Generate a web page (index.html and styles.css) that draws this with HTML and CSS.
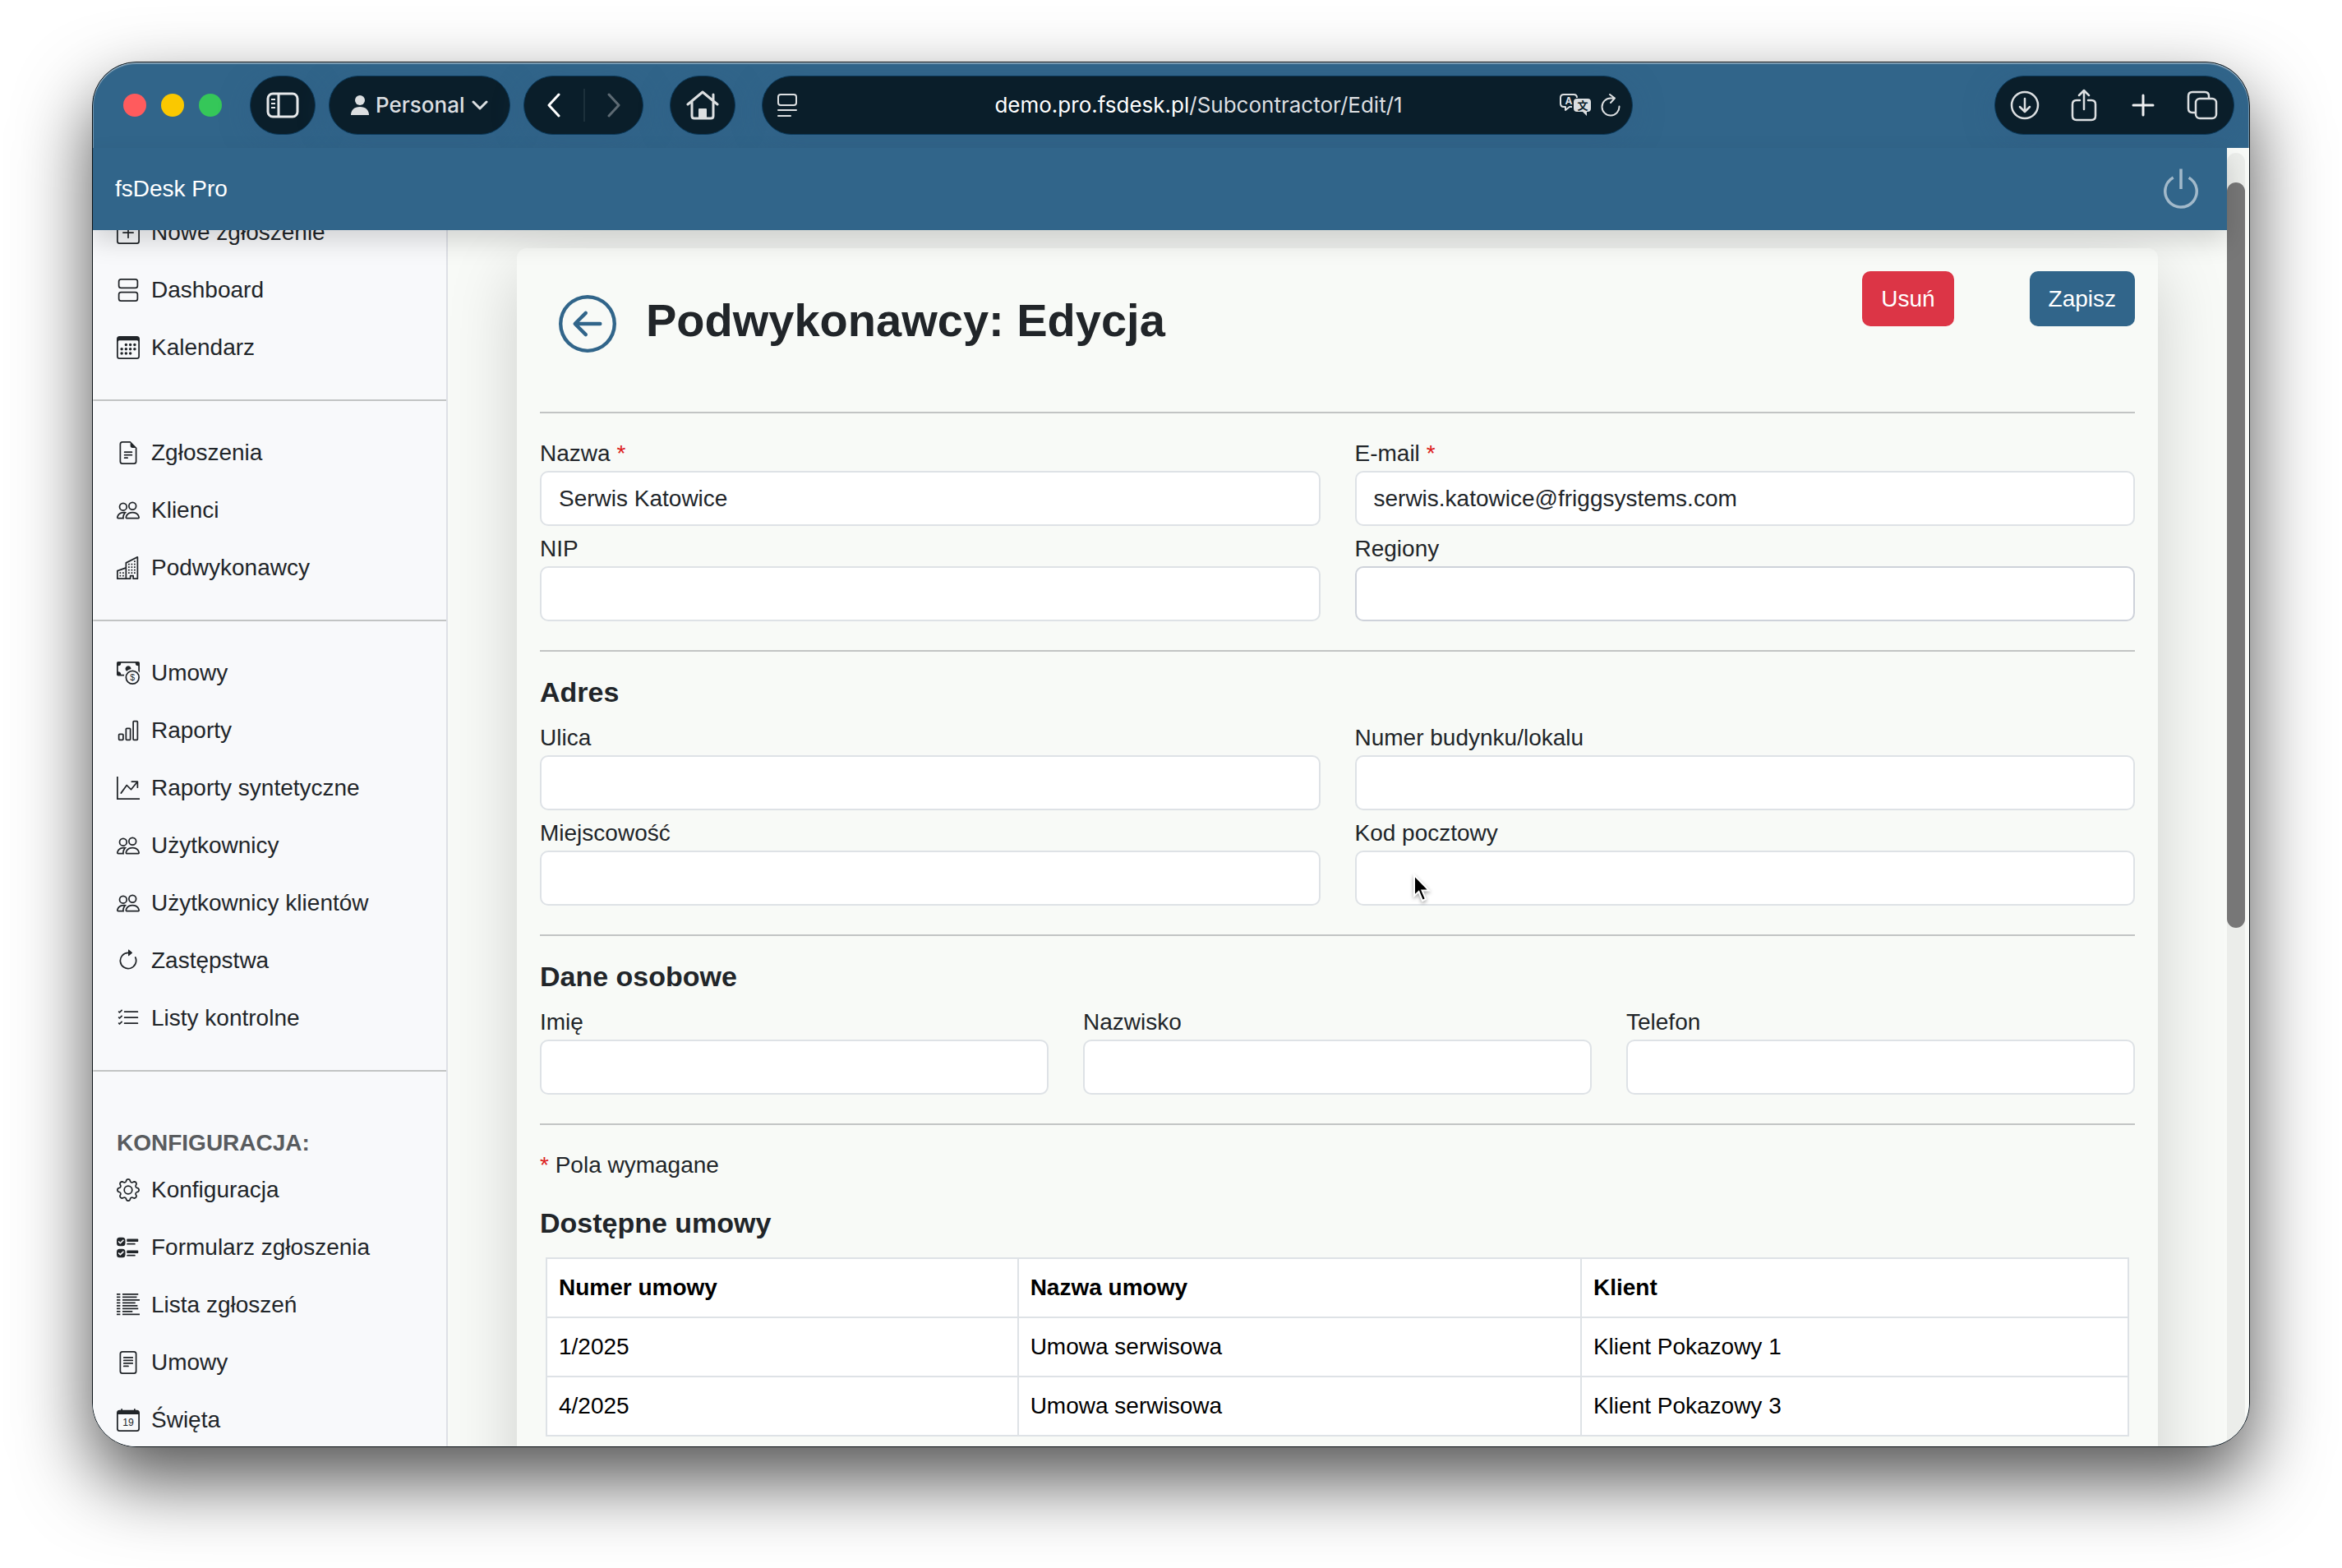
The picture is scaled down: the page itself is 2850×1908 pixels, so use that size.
FILE: index.html
```html
<!DOCTYPE html>
<html lang="pl">
<head>
  <meta charset="UTF-8">
  <title>fsDesk Pro</title>
  <link rel="stylesheet" href="styles.css">
</head>
<body>
  <!-- sidebar icons -->
  <svg class="sprite" aria-hidden="true">
    <symbol id="i-plus" viewBox="0 0 16 16"><path d="M14 1a1 1 0 0 1 1 1v12a1 1 0 0 1-1 1H2a1 1 0 0 1-1-1V2a1 1 0 0 1 1-1zM2 0a2 2 0 0 0-2 2v12a2 2 0 0 0 2 2h12a2 2 0 0 0 2-2V2a2 2 0 0 0-2-2z"/><path d="M8 4a.5.5 0 0 1 .5.5v3h3a.5.5 0 0 1 0 1h-3v3a.5.5 0 0 1-1 0v-3h-3a.5.5 0 0 1 0-1h3v-3A.5.5 0 0 1 8 4"/></symbol>
    <symbol id="i-stack" viewBox="0 0 16 16"><path d="M3 0h10a2 2 0 0 1 2 2v3a2 2 0 0 1-2 2H3a2 2 0 0 1-2-2V2a2 2 0 0 1 2-2m0 1a1 1 0 0 0-1 1v3a1 1 0 0 0 1 1h10a1 1 0 0 0 1-1V2a1 1 0 0 0-1-1zm0 8h10a2 2 0 0 1 2 2v3a2 2 0 0 1-2 2H3a2 2 0 0 1-2-2v-3a2 2 0 0 1 2-2m0 1a1 1 0 0 0-1 1v3a1 1 0 0 0 1 1h10a1 1 0 0 0 1-1v-3a1 1 0 0 0-1-1z"/></symbol>
    <symbol id="i-calendar" viewBox="0 0 16 16"><path d="M14 0H2a2 2 0 0 0-2 2v12a2 2 0 0 0 2 2h12a2 2 0 0 0 2-2V2a2 2 0 0 0-2-2M1 3.857C1 3.384 1.448 3 2 3h12c.552 0 1 .384 1 .857v10.286c0 .473-.448.857-1 .857H2c-.552 0-1-.384-1-.857z"/><path d="M6.500 7a1 1 0 1 0 0-2 1 1 0 0 0 0 2m3 0a1 1 0 1 0 0-2 1 1 0 0 0 0 2m3 0a1 1 0 1 0 0-2 1 1 0 0 0 0 2m-9 3a1 1 0 1 0 0-2 1 1 0 0 0 0 2m3 0a1 1 0 1 0 0-2 1 1 0 0 0 0 2m3 0a1 1 0 1 0 0-2 1 1 0 0 0 0 2m3 0a1 1 0 1 0 0-2 1 1 0 0 0 0 2m-9 3a1 1 0 1 0 0-2 1 1 0 0 0 0 2m3 0a1 1 0 1 0 0-2 1 1 0 0 0 0 2m3 0a1 1 0 1 0 0-2 1 1 0 0 0 0 2"/></symbol>
    <symbol id="i-doc" viewBox="0 0 16 16"><path d="M5.500 7a.5.5 0 0 0 0 1h5a.5.5 0 0 0 0-1zM5 9.500a.5.5 0 0 1 .5-.5h5a.5.5 0 0 1 0 1h-5a.5.5 0 0 1-.5-.5m0 2a.5.5 0 0 1 .5-.5h2a.5.5 0 0 1 0 1h-2a.5.5 0 0 1-.5-.5"/><path d="M9.500 0H4a2 2 0 0 0-2 2v12a2 2 0 0 0 2 2h8a2 2 0 0 0 2-2V4.500zm0 1v2A1.500 1.500 0 0 0 11 4.500h2V14a1 1 0 0 1-1 1H4a1 1 0 0 1-1-1V2a1 1 0 0 1 1-1z"/></symbol>
    <symbol id="i-people" viewBox="0 0 16 16"><path d="M15 14s1 0 1-1-1-4-5-4-5 3-5 4 1 1 1 1zm-7.978-1L7 12.996c.001-.264.167-1.030.76-1.720C8.312 10.629 9.282 10 11 10c1.717 0 2.687.63 3.240 1.276.593.69.758 1.457.76 1.720l-.008.002-.014.002zM11 7a2 2 0 1 0 0-4 2 2 0 0 0 0 4m3-2a3 3 0 1 1-6 0 3 3 0 0 1 6 0M6.936 9.280a6 6 0 0 0-1.230-.247A7 7 0 0 0 5 9c-4 0-5 3-5 4q0 1 1 1h4.216A2.240 2.240 0 0 1 5 13c0-1.010.377-2.042 1.090-2.904.243-.294.526-.569.846-.816M4.920 10A5.500 5.500 0 0 0 4 13H1c0-.26.164-1.030.76-1.724.545-.636 1.492-1.256 3.160-1.275ZM1.500 5.500a3 3 0 1 1 6 0 3 3 0 0 1-6 0m3-2a2 2 0 1 0 0 4 2 2 0 0 0 0-4"/></symbol>
    <symbol id="i-buildings" viewBox="0 0 16 16"><path d="M14.763.075A.5.5 0 0 1 15 .5v15a.5.5 0 0 1-.5.5h-3a.5.5 0 0 1-.5-.5V14h-1v1.500a.5.5 0 0 1-.5.5h-9a.5.5 0 0 1-.5-.5V10a.5.5 0 0 1 .342-.474L6 7.640V4.500a.5.5 0 0 1 .276-.447l8-4a.5.5 0 0 1 .487.022M6 8.694 1 10.360V15h5zM7 15h2v-1.500a.5.5 0 0 1 .5-.5h2a.5.5 0 0 1 .5.5V15h2V1.309l-7 3.500z"/><path d="M2 11h1v1H2zm2 0h1v1H4zm-2 2h1v1H2zm2 0h1v1H4zm4-4h1v1H8zm2 0h1v1h-1zm-2 2h1v1H8zm2 0h1v1h-1zm2-2h1v1h-1zm0 2h1v1h-1zM8 7h1v1H8zm2 0h1v1h-1zm2 0h1v1h-1zM8 5h1v1H8zm2 0h1v1h-1zm2 0h1v1h-1zm0-2h1v1h-1z"/></symbol>
    <symbol id="i-bars" viewBox="0 0 16 16"><path d="M4 11H2v3h2zm5-4H7v7h2zm5-5v12h-2V2zm-2-1a1 1 0 0 0-1 1v12a1 1 0 0 0 1 1h2a1 1 0 0 0 1-1V2a1 1 0 0 0-1-1zM6 7a1 1 0 0 1 1-1h2a1 1 0 0 1 1 1v7a1 1 0 0 1-1 1H7a1 1 0 0 1-1-1zm-5 4a1 1 0 0 1 1-1h2a1 1 0 0 1 1 1v3a1 1 0 0 1-1 1H2a1 1 0 0 1-1-1z"/></symbol>
    <symbol id="i-graph" viewBox="0 0 16 16"><path d="M0 0h1v15h15v1H0zm10 3.500a.5.5 0 0 1 .5-.5h4a.5.5 0 0 1 .5.5v4a.5.5 0 0 1-1 0V4.900l-3.613 4.417a.5.5 0 0 1-.74.037L7.060 6.767l-3.656 5.027a.5.5 0 0 1-.808-.588l4-5.500a.5.5 0 0 1 .758-.06l2.609 2.610L13.445 4H10.500a.5.5 0 0 1-.5-.5"/></symbol>
    <symbol id="i-clockwise" viewBox="0 0 16 16"><path d="M8 3a5 5 0 1 0 4.546 2.914.5.5 0 0 1 .908-.417A6 6 0 1 1 8 2z"/><path d="M8 4.466V.534a.25.25 0 0 1 .41-.192l2.360 1.966c.12.1.12.284 0 .384L8.410 4.658A.25.25 0 0 1 8 4.466"/></symbol>
    <symbol id="i-checks" viewBox="0 0 16 16"><path d="M5.500 3.500h9m-9 4h9m-9 4h9M1.500 3.500l.5.5 1.500-1.500m-2 5 .5.5 1.500-1.500m-2 5 .5.5 1.500-1.500" fill="none" stroke="currentColor" stroke-linecap="round" stroke-linejoin="round"/></symbol>
    <symbol id="i-gear" viewBox="0 0 16 16"><path d="M8 4.754a3.246 3.246 0 1 0 0 6.492 3.246 3.246 0 0 0 0-6.492M5.754 8a2.246 2.246 0 1 1 4.492 0 2.246 2.246 0 0 1-4.492 0"/><path d="M9.796 1.343c-.527-1.790-3.065-1.790-3.592 0l-.094.319a.873.873 0 0 1-1.255.52l-.292-.16c-1.640-.892-3.433.902-2.540 2.541l.159.292a.873.873 0 0 1-.52 1.255l-.319.094c-1.790.527-1.790 3.065 0 3.592l.319.094a.873.873 0 0 1 .52 1.255l-.16.292c-.892 1.640.901 3.434 2.541 2.540l.292-.159a.873.873 0 0 1 1.255.52l.094.319c.527 1.790 3.065 1.790 3.592 0l.094-.319a.873.873 0 0 1 1.255-.52l.292.16c1.640.893 3.434-.902 2.540-2.541l-.159-.292a.873.873 0 0 1 .52-1.255l.319-.094c1.790-.527 1.790-3.065 0-3.592l-.319-.094a.873.873 0 0 1-.52-1.255l.16-.292c.893-1.640-.902-3.433-2.541-2.540l-.292.159a.873.873 0 0 1-1.255-.52zm-2.633.283c.246-.835 1.428-.835 1.674 0l.094.319a1.873 1.873 0 0 0 2.693 1.115l.291-.16c.764-.415 1.600.42 1.184 1.185l-.159.292a1.873 1.873 0 0 0 1.116 2.692l.318.094c.835.246.835 1.428 0 1.674l-.319.094a1.873 1.873 0 0 0-1.115 2.693l.16.291c.415.764-.42 1.600-1.185 1.184l-.291-.159a1.873 1.873 0 0 0-2.693 1.116l-.094.318c-.246.835-1.428.835-1.674 0l-.094-.319a1.873 1.873 0 0 0-2.692-1.115l-.292.16c-.764.415-1.600-.42-1.184-1.185l.159-.291A1.873 1.873 0 0 0 1.945 8.930l-.319-.094c-.835-.246-.835-1.428 0-1.674l.319-.094A1.873 1.873 0 0 0 3.060 4.377l-.16-.292c-.415-.764.42-1.600 1.185-1.184l.292.159a1.873 1.873 0 0 0 2.692-1.115z"/></symbol>
    <symbol id="i-form" viewBox="0 0 16 16"><rect y="1" width="6" height="6" rx="2"/><rect y="9" width="6" height="6" rx="2"/><path d="M1.500 4l1 1 2-2m-3 9 1 1 2-2" fill="none" stroke="#f8f9fb" stroke-linecap="round" stroke-linejoin="round"/><rect x="7" y="2" width="8" height="2" rx=".5"/><rect x="7" y="5" width="6" height="1" rx=".5"/><rect x="7" y="10" width="8" height="2" rx=".5"/><rect x="7" y="13" width="6" height="1" rx=".5"/></symbol>
    <symbol id="i-list" viewBox="0 0 16 16"><path d="M0 .5h2.500M4 .5h11M0 2.500h2.500M4 2.500h10M0 4.500h2.500M4 4.500h12M0 6.500h2.500M4 6.500h9M0 8.500h2.500M4 8.500h10.500M0 10.500h2.500M4 10.500h11M0 12.500h2.500M4 12.500h7M0 14.500h2.500M4 14.500h12" fill="none" stroke="currentColor" stroke-width=".9"/></symbol>
    <symbol id="i-page" viewBox="0 0 16 16"><path d="M5 4a.5.5 0 0 0 0 1h6a.5.5 0 0 0 0-1zm-.5 2.500A.5.5 0 0 1 5 6h6a.5.5 0 0 1 0 1H5a.5.5 0 0 1-.5-.5M5 8a.5.5 0 0 0 0 1h6a.5.5 0 0 0 0-1zm0 2a.5.5 0 0 0 0 1h3a.5.5 0 0 0 0-1z"/><path d="M2 2a2 2 0 0 1 2-2h8a2 2 0 0 1 2 2v12a2 2 0 0 1-2 2H4a2 2 0 0 1-2-2zm10-1H4a1 1 0 0 0-1 1v12a1 1 0 0 0 1 1h8a1 1 0 0 0 1-1V2a1 1 0 0 0-1-1"/></symbol>
  </svg>

  <div class="window">
    <div class="toolbar">
      <div class="lights">
        <span class="light red"></span>
        <span class="light yellow"></span>
        <span class="light green"></span>
      </div>
      <button class="pill square" aria-label="Sidebar">
        <svg width="40" height="32" viewBox="0 0 40 32" fill="none" stroke="#e6e8ea" stroke-width="3"><rect x="2" y="2" width="36" height="28" rx="6"/><path d="M15 2v28"/><path d="M6 9h5M6 14h5M6 19h5" stroke-width="2"/></svg>
      </button>
      <button class="pill profile">
        <svg width="22" height="24" viewBox="0 0 22 24" fill="#dcdfe1"><circle cx="11" cy="6" r="6"/><path d="M0 24c0-6 4-10 11-10s11 4 11 10z"/></svg>
        Personal
        <svg width="20" height="12" viewBox="0 0 20 12" fill="none" stroke="#dcdfe1" stroke-width="3" stroke-linecap="round" stroke-linejoin="round"><path d="M2 2l8 8 8-8"/></svg>
      </button>
      <div class="pill history">
        <button aria-label="Back"><svg width="18" height="30" viewBox="0 0 18 30" fill="none" stroke="#fff" stroke-width="3" stroke-linecap="round" stroke-linejoin="round"><path d="M15 2L3 15l12 13"/></svg></button>
        <button class="next" aria-label="Forward"><svg width="18" height="30" viewBox="0 0 18 30" fill="none" stroke="#5d6a73" stroke-width="3" stroke-linecap="round" stroke-linejoin="round"><path d="M3 2l12 13L3 28"/></svg></button>
      </div>
      <button class="pill square home" aria-label="Home">
        <svg width="40" height="36" viewBox="0 0 40 36" fill="none" stroke="#dcdfe1" stroke-width="3" stroke-linecap="round" stroke-linejoin="round"><path d="M2 17L20 2l18 15M7 14v17q0 3 3 3h20q3 0 3-3V14M33 12V5"/><path d="M16 33V23h8v10z" fill="#dcdfe1" stroke-width="2"/></svg>
      </button>
      <div class="pill address">
        <svg width="24" height="28" viewBox="0 0 24 28" fill="none" stroke="#dcdfe1" stroke-width="2" stroke-linecap="round"><rect x="1" y="1" width="22" height="13" rx="3"/><path d="M1 20h22M1 27h15"/></svg>
        <span class="url">demo.pro.fsdesk.pl<span class="path">/Subcontractor/Edit/1</span></span>
        <svg width="38" height="28" viewBox="0 0 38 28"><path d="M15 16h-3l-5 4v-4H5q-4 0-4-4V5q0-4 4-4h12q4 0 4 4" fill="none" stroke="#dcdfe1" stroke-width="2" stroke-linejoin="round"/><text x="11" y="13" font-size="12" font-weight="700" text-anchor="middle" fill="#dcdfe1">A</text><path d="M21 6h13q4 0 4 4v8q0 4-4 4h-1v5l-5-5h-7q-4 0-4-4v-8q0-4 4-4z" fill="#dcdfe1"/><text x="28" y="19" font-size="13" font-weight="700" text-anchor="middle" font-family="Noto Sans CJK SC, sans-serif" fill="#0a1e2a">文</text></svg>
        <svg class="reload" width="24" height="28" viewBox="0 0 24 28" fill="none" stroke="#dcdfe1" stroke-width="2" stroke-linecap="round" stroke-linejoin="round"><path d="M22.500 15.500a10.500 10.500 0 1 1-10.500-10h5M11 1l6 4.500-5 5.500"/></svg>
      </div>
      <div class="pill actions">
        <button aria-label="Downloads"><svg width="36" height="36" viewBox="0 0 36 36" fill="none" stroke="#dcdfe1" stroke-width="2.500" stroke-linecap="round" stroke-linejoin="round"><circle cx="18" cy="18" r="16"/><path d="M18 10v15M12 20l6 6 6-6"/></svg></button>
        <button aria-label="Share"><svg width="32" height="40" viewBox="0 0 32 40" fill="none" stroke="#dcdfe1" stroke-width="2.500" stroke-linecap="round" stroke-linejoin="round"><path d="M11 14H7q-5 0-5 5v14q0 5 5 5h18q5 0 5-5V19q0-5-5-5h-4M16 25V2M10 8l6-6 6 6"/></svg></button>
        <button aria-label="New tab"><svg width="28" height="28" viewBox="0 0 28 28" fill="none" stroke="#f0f1f2" stroke-width="3" stroke-linecap="round"><path d="M14 2v24M2 14h24"/></svg></button>
        <button aria-label="Tabs"><svg width="38" height="36" viewBox="0 0 38 36" fill="none" stroke="#dcdfe1" stroke-width="2.500"><rect x="11" y="10" width="25" height="24" rx="5"/><path d="M11 27H7q-5 0-5-5V7q0-5 5-5h15q5 0 5 5v3"/></svg></button>
      </div>
    </div>

    <div class="viewport">
      <div class="page">
        <header class="topbar">
          <a class="brand" href="#">fsDesk Pro</a>
          <button class="logout" aria-label="Wyloguj"><svg width="56" height="56" viewBox="0 0 16 16" fill="currentColor"><path d="M7.500 1v7h1V1z"/><path d="M3 8.812a5 5 0 0 1 2.578-4.375l-.485-.874A6 6 0 1 0 11 3.616l-.501.865A5 5 0 1 1 3 8.812"/></svg></button>
        </header>

        <div class="columns">
          <nav class="sidebar">
            <div class="menu">
              <a href="#"><svg class="icon"><use href="#i-plus"/></svg>Nowe zgłoszenie</a>
              <a href="#"><svg class="icon"><use href="#i-stack"/></svg>Dashboard</a>
              <a href="#"><svg class="icon"><use href="#i-calendar"/></svg>Kalendarz</a>
              <hr>
              <a href="#"><svg class="icon"><use href="#i-doc"/></svg>Zgłoszenia</a>
              <a href="#"><svg class="icon"><use href="#i-people"/></svg>Klienci</a>
              <a href="#"><svg class="icon"><use href="#i-buildings"/></svg>Podwykonawcy</a>
              <hr>
              <a href="#"><svg class="icon" viewBox="0 0 16 16"><path fill-rule="evenodd" d="M11 15a4 4 0 1 0 0-8 4 4 0 0 0 0 8m5-4a5 5 0 1 1-10 0 5 5 0 0 1 10 0"/><text x="11" y="13" font-size="6" text-anchor="middle">$</text><path d="M1 0a1 1 0 0 0-1 1v8a1 1 0 0 0 1 1h4.083q.088-.517.258-1H3a2 2 0 0 0-2-2V3a2 2 0 0 0 2-2h10a2 2 0 0 0 2 2v3.528c.38.34.717.728 1 1.154V1a1 1 0 0 0-1-1z"/><path d="M9.998 5.083 10 5a2 2 0 1 0-3.132 1.650 6 6 0 0 1 3.130-1.567"/></svg>Umowy</a>
              <a href="#"><svg class="icon"><use href="#i-bars"/></svg>Raporty</a>
              <a href="#"><svg class="icon"><use href="#i-graph"/></svg>Raporty syntetyczne</a>
              <a href="#"><svg class="icon"><use href="#i-people"/></svg>Użytkownicy</a>
              <a href="#"><svg class="icon"><use href="#i-people"/></svg>Użytkownicy klientów</a>
              <a href="#"><svg class="icon"><use href="#i-clockwise"/></svg>Zastępstwa</a>
              <a href="#"><svg class="icon"><use href="#i-checks"/></svg>Listy kontrolne</a>
              <hr>
              <h6>KONFIGURACJA:</h6>
              <a href="#"><svg class="icon"><use href="#i-gear"/></svg>Konfiguracja</a>
              <a href="#"><svg class="icon"><use href="#i-form"/></svg>Formularz zgłoszenia</a>
              <a href="#"><svg class="icon"><use href="#i-list"/></svg>Lista zgłoszeń</a>
              <a href="#"><svg class="icon"><use href="#i-page"/></svg>Umowy</a>
              <a href="#"><svg class="icon" viewBox="0 0 16 16"><path d="M3.500 0a.5.5 0 0 1 .5.5V1h8V.5a.5.5 0 0 1 1 0V1h1a2 2 0 0 1 2 2v11a2 2 0 0 1-2 2H2a2 2 0 0 1-2-2V3a2 2 0 0 1 2-2h1V.5a.5.5 0 0 1 .5-.5M1 4v10a1 1 0 0 0 1 1h12a1 1 0 0 0 1-1V4z"/><text x="8" y="12" font-size="7" text-anchor="middle">19</text></svg>Święta</a>
            </div>
          </nav>

          <main class="content">
            <form class="card">
              <div class="card-header">
                <a class="back" href="#" aria-label="Wstecz"><svg width="70" height="70" viewBox="0 0 16 16" fill="currentColor"><path d="M1 8a7 7 0 1 0 14 0A7 7 0 0 0 1 8m15 0A8 8 0 1 1 0 8a8 8 0 0 1 16 0m-4.500-.5a.5.5 0 0 1 0 1H5.707l2.147 2.146a.5.5 0 0 1-.708.708l-3-3a.5.5 0 0 1 0-.708l3-3a.5.5 0 1 1 .708.708L5.707 7.500z"/></svg></a>
                <h1>Podwykonawcy: Edycja</h1>
                <div class="btn-group">
                  <button type="button" class="btn btn-danger">Usuń</button>
                  <button type="button" class="btn btn-primary">Zapisz</button>
                </div>
              </div>
              <hr>
              <div class="row two">
                <div class="field">
                  <label for="nazwa">Nazwa <span class="req">*</span></label>
                  <input type="text" id="nazwa" value="Serwis Katowice">
                </div>
                <div class="field">
                  <label for="email">E-mail <span class="req">*</span></label>
                  <input type="text" id="email" value="serwis.katowice@friggsystems.com">
                </div>
                <div class="field">
                  <label for="nip">NIP</label>
                  <input type="text" id="nip">
                </div>
                <div class="field">
                  <label for="regiony">Regiony</label>
                  <input type="text" id="regiony" class="tags">
                </div>
              </div>
              <hr>
              <h5>Adres</h5>
              <div class="row two">
                <div class="field">
                  <label for="ulica">Ulica</label>
                  <input type="text" id="ulica">
                </div>
                <div class="field">
                  <label for="numer">Numer budynku/lokalu</label>
                  <input type="text" id="numer">
                </div>
                <div class="field">
                  <label for="miejscowosc">Miejscowość</label>
                  <input type="text" id="miejscowosc">
                </div>
                <div class="field">
                  <label for="kod">Kod pocztowy</label>
                  <input type="text" id="kod">
                  <svg class="cursor" width="26" height="40" viewBox="0 0 26 40"><path d="M3 3v25l5.500-5 4.500 11 4-2-4.500-10.500H21z" fill="#000" stroke="#fff" stroke-width="2"/></svg>
                </div>
              </div>
              <hr>
              <h5>Dane osobowe</h5>
              <div class="row three">
                <div class="field">
                  <label for="imie">Imię</label>
                  <input type="text" id="imie">
                </div>
                <div class="field">
                  <label for="nazwisko">Nazwisko</label>
                  <input type="text" id="nazwisko">
                </div>
                <div class="field">
                  <label for="telefon">Telefon</label>
                  <input type="text" id="telefon">
                </div>
              </div>
              <hr>
              <p><span class="req">*</span> Pola wymagane</p>
              <h5>Dostępne umowy</h5>
              <div class="table-wrap">
                <table>
                  <colgroup>
                    <col class="col-number">
                    <col class="col-name">
                    <col>
                  </colgroup>
                  <thead>
                    <tr><th>Numer umowy</th><th>Nazwa umowy</th><th>Klient</th></tr>
                  </thead>
                  <tbody>
                    <tr><td>1/2025</td><td>Umowa serwisowa</td><td>Klient Pokazowy 1</td></tr>
                    <tr><td>4/2025</td><td>Umowa serwisowa</td><td>Klient Pokazowy 3</td></tr>
                  </tbody>
                </table>
              </div>
            </form>
          </main>
        </div>
      </div>

      <div class="scrollbar"><div class="track"><div class="thumb"></div></div></div>
    </div>
  </div>
</body>
</html>
```
FILE: styles.css
```css
* {
  box-sizing: border-box;
}
body {
  margin: 0;
  height: 100vh;
  padding: 75px 112px 147px;
  display: flex;
  background-color: #fff;
  color: #212529;
  font-family: "Liberation Sans", Arial, sans-serif;
  font-size: 28px;
  line-height: 42px;
  overflow: hidden;
}
button, input {
  font: inherit;
}
button {
  padding: 0;
  border: 0;
  background: none;
  cursor: pointer;
}
a {
  color: inherit;
  text-decoration: none;
}
svg {
  display: block;
  flex-shrink: 0;
}
.sprite {
  position: absolute;
  width: 0;
  height: 0;
}

/* browser window */
.window {
  flex: 1;
  min-width: 0;
  display: flex;
  flex-direction: column;
  position: relative;
  border: 1px solid #0b1216;
  border-radius: 54px;
  overflow: hidden;
  background-color: #31658a;
  box-shadow: 0 40px 90px rgba(0, 0, 0, 0.68);
}
.window::after {
  content: "";
  position: absolute;
  inset: 0;
  border-radius: 53px;
  box-shadow: inset 0 0 0 1px rgba(255, 255, 255, 0.3), inset 0 2px 1px rgba(255, 255, 255, 0.3);
  pointer-events: none;
}
.toolbar {
  display: flex;
  align-items: center;
  gap: 16px;
  height: 104px;
  flex-shrink: 0;
  padding: 0 18px 0 37px;
  font-family: Inter, "Liberation Sans", sans-serif;
  font-size: 26px;
  font-weight: 500;
  color: #dcdfe1;
}
.lights {
  display: flex;
  gap: 18px;
  margin-right: 18px;
}
.light {
  width: 28px;
  height: 28px;
  border-radius: 50%;
}
.red { background-color: #ff5b5d; }
.yellow { background-color: #fac800; }
.green { background-color: #35c759; }
.pill {
  display: flex;
  align-items: center;
  justify-content: center;
  height: 72px;
  border: 1px solid #0c3a5b;
  border-radius: 36px;
  background-color: #0a1e2a;
  color: #dcdfe1;
  box-shadow: 0 8px 40px rgba(50, 90, 130, 0.3);
}
.square {
  width: 80px;
}
.profile {
  gap: 8px;
  padding: 0 26px;
}
.history button {
  width: 72px;
  height: 40px;
  display: flex;
  align-items: center;
  justify-content: center;
}
.history .next {
  border-left: 2px solid #1c303b;
}
.home {
  margin: 0 16px;
}
.address {
  flex: 0 1 1060px;
  padding: 0 14px 0 18px;
  font-weight: 400;
}
.url {
  flex: 1;
  text-align: center;
  padding-left: 50px;
  color: #fff;
}
.path {
  color: #dcdfe1;
}
.reload {
  margin-left: 12px;
}
.actions {
  margin-left: auto;
  padding-right: 2px;
}
.actions button {
  width: 72px;
  height: 72px;
  display: flex;
  align-items: center;
  justify-content: center;
}

/* page */
.viewport {
  flex: 1;
  min-height: 0;
  display: flex;
}
.page {
  flex: 1;
  min-width: 0;
  display: flex;
  flex-direction: column;
  background-color: #f8faf7;
}
.topbar {
  display: flex;
  align-items: center;
  justify-content: space-between;
  height: 100px;
  flex-shrink: 0;
  padding: 0 28px 0 27px;
  background-color: #31658a;
  color: #fff;
  box-shadow: 0 14px 28px rgba(0, 0, 0, 0.15);
  position: relative;
  z-index: 1;
}
.logout {
  color: rgba(255, 255, 255, 0.55);
}
.columns {
  flex: 1;
  min-height: 0;
  display: flex;
}
.sidebar {
  width: 432px;
  flex-shrink: 0;
  overflow: hidden;
  background-color: #f8f9fb;
  border-right: 2px solid #dee0e6;
}
/* list is scrolled a little under the top bar */
.menu {
  margin-top: -32px;
}
.menu a {
  display: flex;
  align-items: center;
  gap: 14px;
  height: 70px;
  padding: 0 28px 0 29px;
}
.icon {
  width: 28px;
  height: 28px;
  fill: currentColor;
}
hr {
  height: 2px;
  margin: 28px 0;
  border: 0;
  background-color: #c2c4c4;
}
.menu h6 {
  margin: 0;
  padding: 38px 29px 1px;
  font-size: 28px;
  color: #595c5f;
}
.content {
  flex: 1;
  min-width: 0;
  padding: 22px 84px 0;
  overflow: hidden;
}
.card {
  min-height: 1600px;
  padding: 28px;
  border-radius: 12px;
  background-color: #f8faf7;
  box-shadow: 0 28px 84px rgba(0, 0, 0, 0.175);
}
.card-header {
  display: flex;
  align-items: flex-start;
  padding-bottom: 44px;
}
.back {
  margin: 29px 36px 0 23px;
  color: #31658a;
}
h1 {
  flex: 1;
  margin: 26px 0 0;
  font-size: 56px;
  line-height: 67px;
}
.btn-group {
  display: flex;
  gap: 92px;
}
.btn {
  height: 67px;
  padding: 0 23px;
  border-radius: 10px;
  color: #fff;
}
.btn-danger { background-color: #dc3546; }
.btn-primary { background-color: #31658a; }
.row {
  display: grid;
  gap: 7px 42px;
  margin-bottom: 35px;
}
.two { grid-template-columns: 1fr 1fr; }
.three { grid-template-columns: 1fr 1fr 1fr; }
.field {
  position: relative;
}
label {
  display: block;
}
.req {
  color: #dc2020;
}
input {
  display: block;
  width: 100%;
  height: 67px;
  padding: 0 21px;
  border: 2px solid #dee2e6;
  border-radius: 10px;
  background-color: #fff;
  color: #212529;
}
.tags {
  border-color: #ced2da;
}
.cursor {
  position: absolute;
  left: 69px;
  top: 69px;
  filter: drop-shadow(0 2px 2px rgba(0, 0, 0, 0.35));
}
h5 {
  margin: 0 0 14px;
  font-size: 34px;
  line-height: 42px;
}
p {
  margin: 0 0 28px;
}
.table-wrap {
  padding: 7px;
}
table {
  width: 100%;
  table-layout: fixed;
  border-collapse: collapse;
  background-color: #fff;
  color: #000;
}
.col-number { width: 29.8%; }
.col-name { width: 35.6%; }
th, td {
  padding: 14px;
  border: 2px solid #dee2e6;
  text-align: left;
}

/* scrollbar */
.scrollbar {
  display: flex;
  width: 27px;
  padding: 6px 5px 0 0;
  background-color: #f8faf7;
}
.track {
  flex: 1;
  padding-top: 36px;
  border-radius: 11px;
  background-color: #ebedea;
}
.thumb {
  height: 59%;
  border-radius: 11px;
  background-color: #777;
}
```
